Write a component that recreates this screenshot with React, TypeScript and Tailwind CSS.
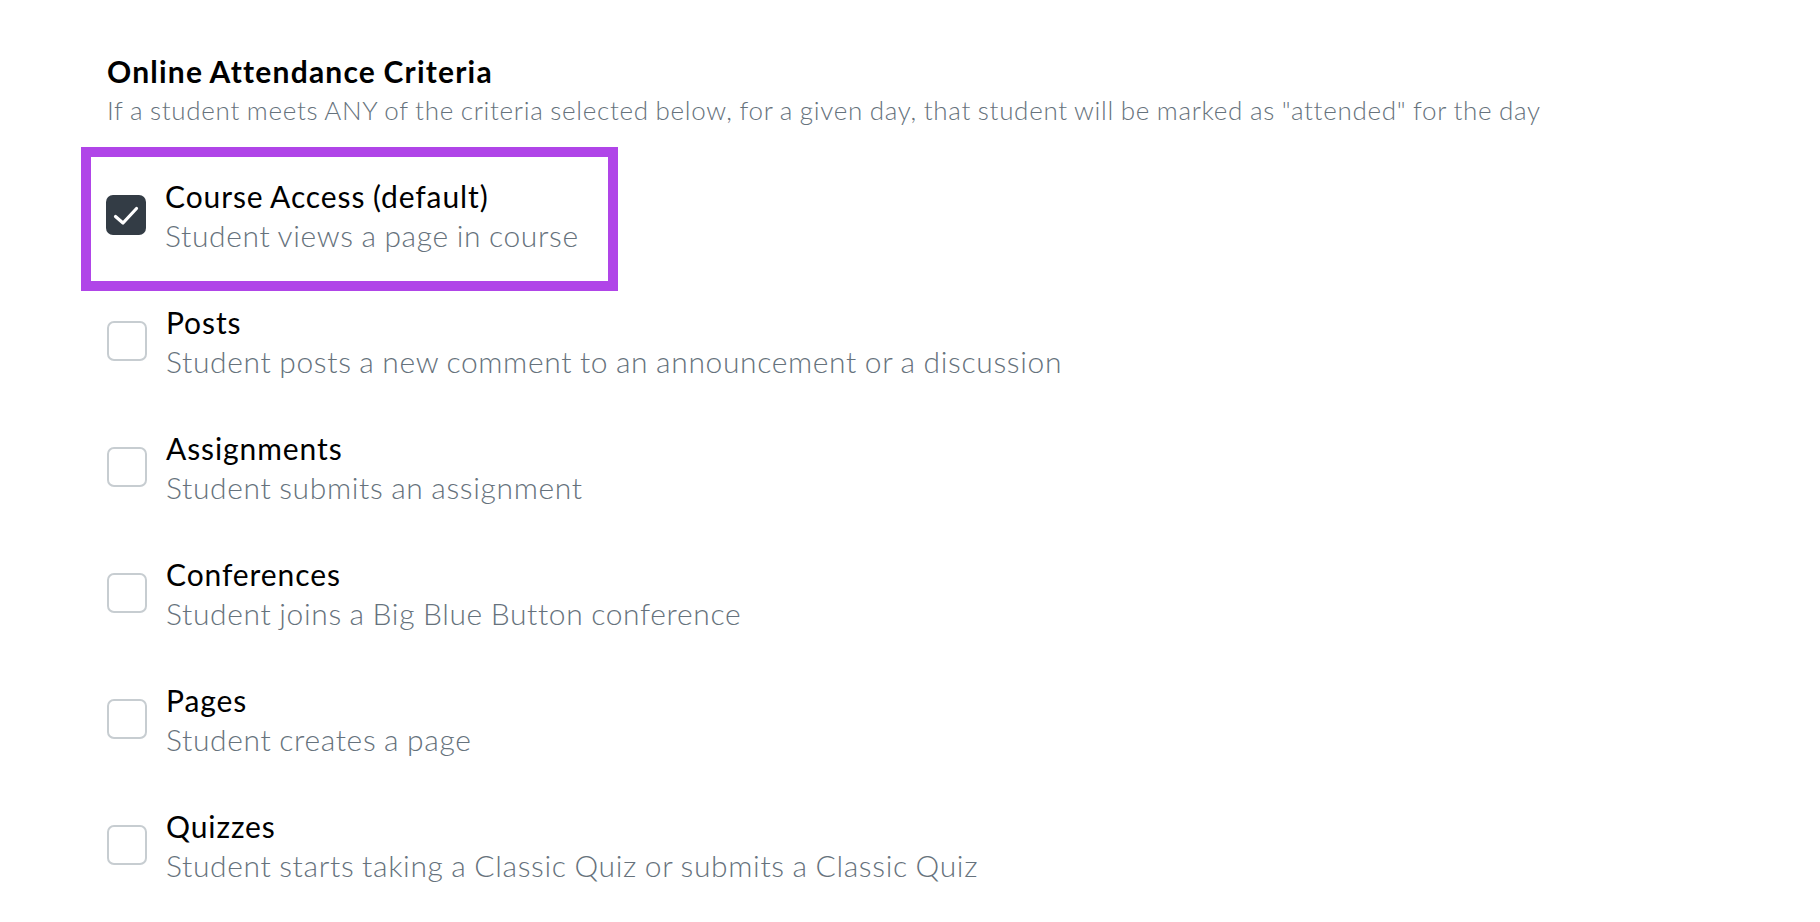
import React from 'react';

type Criterion = {
  title: string;
  description: string;
  checked?: boolean;
};

const criteria: Criterion[] = [
  { title: 'Course Access (default)', description: 'Student views a page in course', checked: true },
  { title: 'Posts', description: 'Student posts a new comment to an announcement or a discussion' },
  { title: 'Assignments', description: 'Student submits an assignment' },
  { title: 'Conferences', description: 'Student joins a Big Blue Button conference' },
  { title: 'Pages', description: 'Student creates a page' },
  { title: 'Quizzes', description: 'Student starts taking a Classic Quiz or submits a Classic Quiz' },
];

const Checkbox: React.FC<{ checked?: boolean }> = ({ checked }) =>
  checked ? (
    <span className="w-[40px] h-[40px] shrink-0 rounded-[7px] bg-[#333c45] flex items-center justify-center">
      <svg width="40" height="40" viewBox="0 0 40 40" fill="none">
        <path d="M9.5 21.5l7.5 6.5 13.5-14.5" stroke="#fff" strokeWidth="3.2" strokeLinecap="round" strokeLinejoin="round" />
      </svg>
    </span>
  ) : (
    <span className="w-[40px] h-[40px] shrink-0 rounded-[7px] border-2 border-[#c7cdd1] bg-white" />
  );

const CriterionRow: React.FC<{ item: Criterion }> = ({ item }) => (
  <div className="flex items-center gap-[19px]">
    <Checkbox checked={item.checked} />
    <div className="flex flex-col pt-[2px]">
      <span className="text-[30px] leading-[39px] tracking-[0.9px] [word-spacing:-1px] text-black">{item.title}</span>
      <span className="text-[30px] leading-[39px] tracking-[0.65px] [word-spacing:-1px] font-light text-[#66727c]">
        {item.description}
      </span>
    </div>
  </div>
);

export default function App() {
  return (
    <div className="min-h-screen bg-white font-['Lato','Open_Sans',sans-serif] pl-[107px] pt-[52px]">
      <h2 className="text-[30px] leading-[39px] font-bold tracking-[1.2px] [word-spacing:-1px] text-black">
        Online Attendance Criteria
      </h2>
      <p className="text-[26px] leading-[39px] font-light tracking-[0.7px] [word-spacing:-1px] text-[#66727c]">
        If a student meets ANY of the criteria selected below, for a given day, that student will be marked as "attended" for the day
      </p>
      <div className="mt-[45px] flex flex-col gap-[46px]">
        {criteria.map((item, i) =>
          i === 0 ? (
            <div
              key={item.title}
              className="w-[537px] -ml-[26px] -mt-[28px] -mb-[36px] border-[10px] border-[#b045e8] pl-[15px] pt-[18px] pb-[26px]"
            >
              <CriterionRow item={item} />
            </div>
          ) : (
            <CriterionRow key={item.title} item={item} />
          )
        )}
      </div>
    </div>
  );
}
